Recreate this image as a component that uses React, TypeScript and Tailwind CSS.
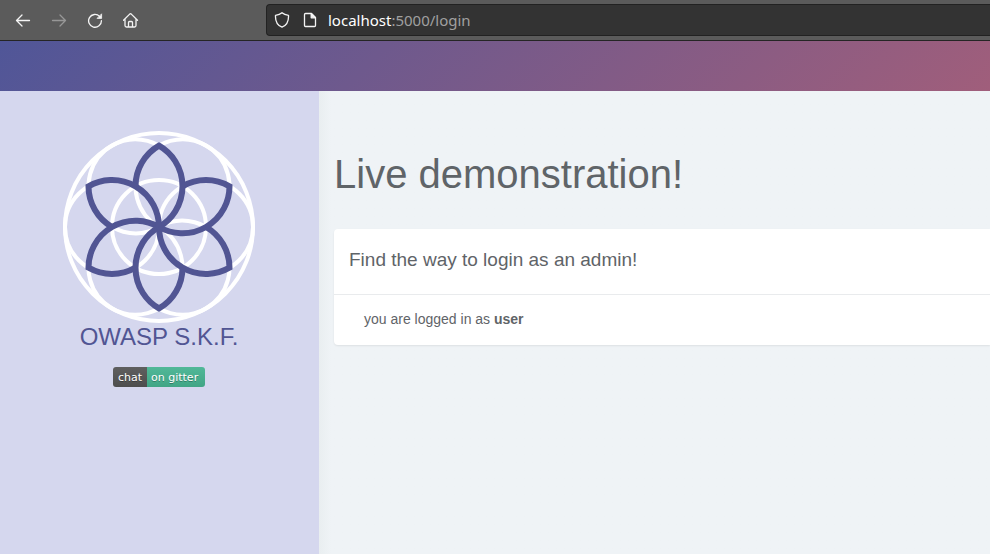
import { ReactNode } from "react";

const PETAL_ANGLES = [0, 60, 120, 180, 240, 300];

function NavButton({ label, dim = false, children }: { label: string; dim?: boolean; children: ReactNode }) {
  return (
    <button type="button" aria-label={label} className={dim ? "text-[#979797]" : "text-[#f4f4f4]"}>
      <svg width="16" height="16" viewBox="0 0 16 16" fill="none" stroke="currentColor" strokeWidth="1.3" strokeLinecap="round" strokeLinejoin="round" className="block">
        {children}
      </svg>
    </button>
  );
}

function BrowserBar() {
  return (
    <div className="flex h-[41px] items-start border-b border-[#252525] bg-[#5b5b5b] pt-1">
      <nav aria-label="Browser" className="flex h-8 w-[266px] shrink-0 items-center gap-5 pl-[15px]">
        <NavButton label="Back">
          <path d="M14.5 8.5H1.500M7 3L1.500 8.500L7 14" />
        </NavButton>
        <NavButton label="Forward" dim>
          <path d="M1.500 8.500H14.500M9 3L14.500 8.500L9 14" />
        </NavButton>
        <NavButton label="Reload">
          <path d="M12.600 4.400A6.400 6.400 0 1 0 14.400 8.700" />
          <path d="M14.600 2.200V6.400H10.400Z" fill="currentColor" strokeWidth="0.8" />
        </NavButton>
        <NavButton label="Home">
          <path d="M0.500 8.200L6.700 2.100Q7.500 1.400 8.300 2.100L14.500 8.200M2 7V13.500Q2 15 3.500 15H11.500Q13 15 13 13.500V7M5.500 14.800V10.500Q5.500 9.500 6.500 9.500H8.500Q9.500 9.500 9.500 10.500V14.800" />
        </NavButton>
      </nav>
      <div className="flex h-8 flex-1 items-center rounded-l border border-r-0 border-[#222] bg-[#333] pl-[7px] text-[#f4f4f4]">
        <svg width="16" height="16" viewBox="0 0 16 16" fill="none" stroke="currentColor" strokeWidth="1.3" strokeLinejoin="round" className="mr-3 shrink-0">
          <path d="M8 0.800C6.400 2.300 4 3.100 1.500 3.300C1.200 8.800 3.200 13.300 8 15.200C12.800 13.300 14.800 8.800 14.500 3.300C12 3.100 9.600 2.300 8 0.800Z" />
        </svg>
        <svg width="16" height="16" viewBox="0 0 16 16" fill="none" stroke="currentColor" strokeWidth="1.3" strokeLinejoin="round" className="mr-[10px] shrink-0">
          <path d="M3.500 1.500H9.500L13.500 5.500V13.500Q13.500 14.500 12.500 14.500H3.500Q2.500 14.500 2.500 13.500V2.500Q2.500 1.500 3.500 1.500Z" />
          <path d="M9.200 1.700V5.800H13.300Z" fill="currentColor" />
        </svg>
        <div className="font-['Noto_Sans','Open_Sans',sans-serif] text-[15px] leading-5 text-[#a0a0a0]">
          <span className="text-white">localhost</span>:5000/login
        </div>
      </div>
    </div>
  );
}

function FlowerLogo() {
  return (
    <svg width="192" height="192" viewBox="-96 -96 192 192" fill="none" role="img" aria-label="OWASP S.K.F. logo" className="block">
      <g stroke="#fff" strokeWidth="4">
        <circle r="94" />
        <circle r="47" />
        {PETAL_ANGLES.map((angle) => (
          <circle key={angle} cx="47" r="47" transform={`rotate(${angle})`} />
        ))}
      </g>
      <g stroke="#515593" strokeWidth="6">
        {PETAL_ANGLES.map((angle) => (
          <path key={angle} d="M-23.5 -40.7A47 47 0 0 1 0 -81.4A47 47 0 0 1 0 0" transform={`rotate(${angle})`} />
        ))}
      </g>
    </svg>
  );
}

function Sidebar() {
  return (
    <aside className="flex w-[319px] shrink-0 flex-col items-center border-r border-[#d5d7ee] bg-[#d5d7ee] pt-10">
      <FlowerLogo />
      <div className="text-2xl leading-7 text-[#515593]">OWASP S.K.F.</div>
      <a href="#gitter" className="mt-4 flex h-5 overflow-hidden rounded-[3px] font-['DejaVu_Sans',sans-serif] text-[11px] leading-[21px] text-white [text-shadow:0_1px_0_rgba(1,1,1,0.3)]">
        <span className="w-[34px] bg-linear-to-b from-[#5f5f5f] to-[#4d4d4d] text-center">chat</span>
        <span className="w-[58px] bg-linear-to-b from-[#51b898] to-[#41a585] pl-1">on gitter</span>
      </a>
    </aside>
  );
}

export default function App() {
  return (
    <div className="flex min-h-screen flex-col overflow-hidden bg-[#eff3f6] font-['Liberation_Sans',Arial,sans-serif] text-[#5f6468]">
      <BrowserBar />
      <header className="h-[50px] bg-[linear-gradient(135deg,#505698,#a05e7b)]" />
      <div className="flex flex-1">
        <Sidebar />
        <main className="min-w-0 flex-1 bg-linear-to-r from-[#e9eef0] to-[#eff3f6] to-[12px] pt-[60px] pl-[15px]">
          <h1 className="text-[40px] leading-[46px]">Live demonstration!</h1>
          <section className="mt-8 rounded-l bg-white shadow-[0_1px_2px_rgba(0,0,0,0.08)]">
            <h2 className="h-[66px] border-b border-[#e9ebed] px-[15px] pt-5 text-[19px] leading-[22px]">
              Find the way to login as an admin!
            </h2>
            <p className="px-[30px] pt-[14px] pb-4 text-sm leading-5">
              you are logged in as <b>user</b>
            </p>
          </section>
        </main>
      </div>
    </div>
  );
}
